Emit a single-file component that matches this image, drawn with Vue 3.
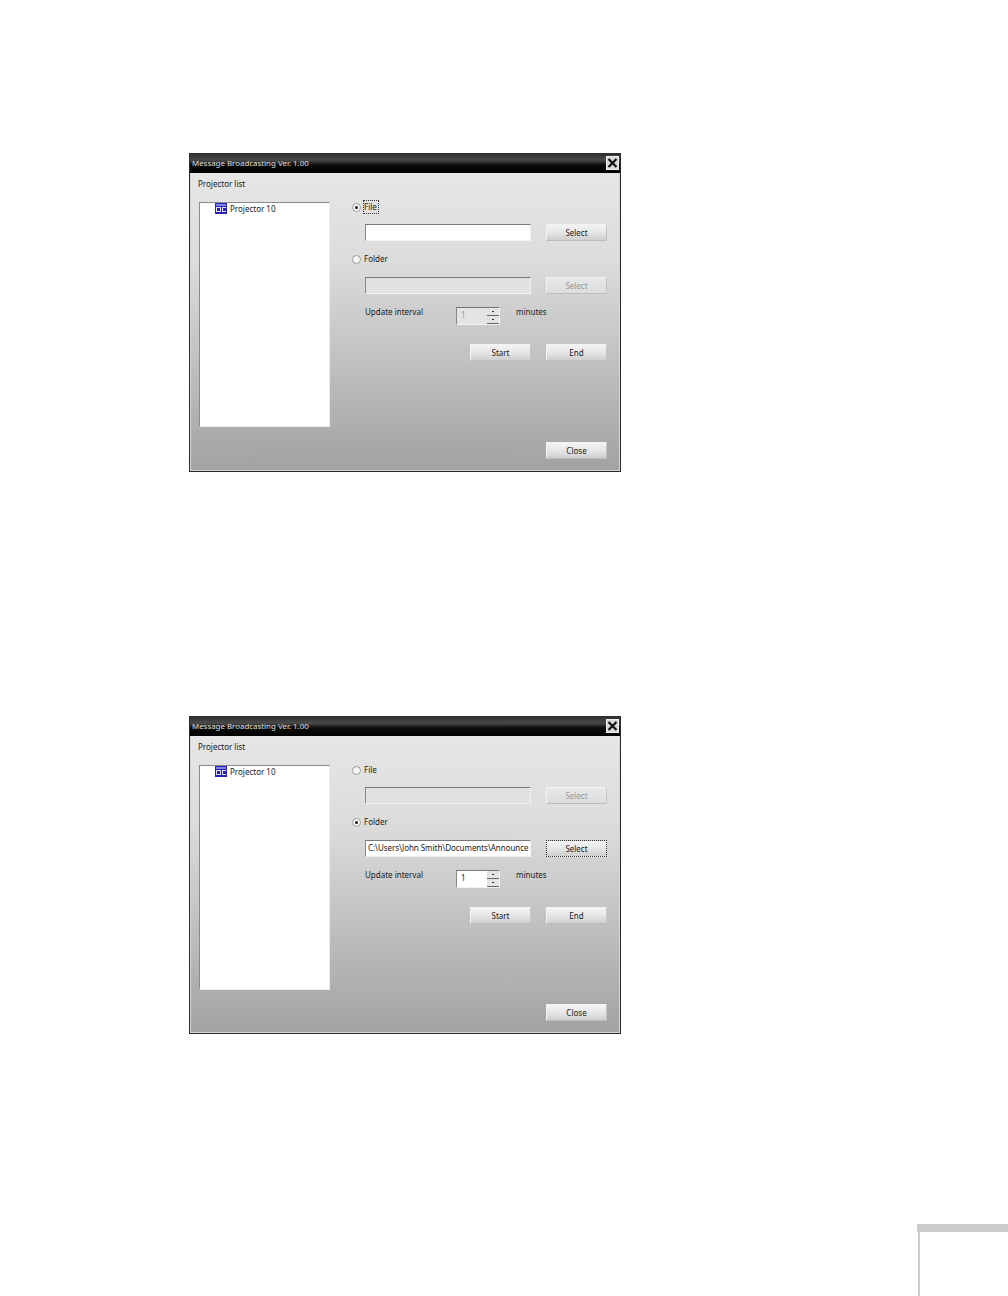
<script setup>
const dialogs = [
  { mode: 'file', path: '', focus: 'radio' },
  { mode: 'folder', path: 'C:\\Users\\John Smith\\Documents\\Announce', focus: 'select' }
]
</script>

<template>
  <div class="page">
    <section v-for="(d, i) in dialogs" :key="i" class="dialog">
      <header class="titlebar">
        <span class="title">Message Broadcasting Ver. 1.00</span>
        <span class="closex">
          <svg width="13" height="14" viewBox="0 0 13 14">
            <path d="M2.5 3 L10.5 11 M10.5 3 L2.5 11" stroke="#111" stroke-width="2.2" fill="none" />
          </svg>
        </span>
      </header>
      <div class="body">
        <div class="left">
          <div class="list-label">Projector list</div>
          <div class="list">
            <div class="tree-item">
              <svg class="pj" width="12" height="11" viewBox="0 0 12 11">
                <rect width="12" height="11" fill="#2a22b8" />
                <rect x="1" y="1" width="10" height="2" fill="#7d84e4" />
                <rect x="1" y="4" width="5" height="5" fill="#dfe2f8" />
                <rect x="7" y="4" width="4" height="5" fill="#dfe2f8" />
                <rect x="2" y="5" width="3" height="3" fill="#2a22b8" />
                <rect x="8" y="5" width="3" height="3" fill="#2a22b8" />
              </svg>
              <span>Projector 10</span>
            </div>
          </div>
        </div>
        <div class="right">
          <div class="radio-row first">
            <span class="radio" :class="{ on: d.mode === 'file' }"></span>
            <span class="radio-text" :class="{ dotted: d.focus === 'radio' }">File</span>
          </div>
          <div class="field-row">
            <div class="input" :class="{ off: d.mode !== 'file' }"></div>
            <button class="btn" :class="{ dis: d.mode !== 'file' }">Select</button>
          </div>
          <div class="radio-row">
            <span class="radio" :class="{ on: d.mode === 'folder' }"></span>
            <span class="radio-text">Folder</span>
          </div>
          <div class="field-row second">
            <div class="input" :class="{ off: d.mode !== 'folder' }">{{ d.path }}</div>
            <button class="btn" :class="{ dis: d.mode !== 'folder', focus: d.focus === 'select' }">
              <span>Select</span>
            </button>
          </div>
          <div class="interval-row">
            <span class="interval-label">Update interval</span>
            <div class="spin" :class="{ off: d.mode !== 'folder' }">
              <span class="spin-val">1</span>
              <span class="arrows">
                <i class="up"></i>
                <i class="down"></i>
              </span>
            </div>
            <span class="minutes">minutes</span>
          </div>
          <div class="actions">
            <button class="btn">Start</button>
            <button class="btn">End</button>
          </div>
          <div class="close-row">
            <button class="btn">Close</button>
          </div>
        </div>
      </div>
    </section>
    <div class="tab">
      <div class="tab-bar"></div>
      <div class="tab-body"></div>
    </div>
  </div>
</template>

<style scoped>
.page {
  position: relative;
  width: 1008px;
  height: 1296px;
  padding: 153px 0 0 189px;
  box-sizing: border-box;
  background: #fff;
  font-family: "Noto Sans", "Open Sans", sans-serif;
  font-size: 8px;
  color: #1a1a1a;
  overflow: hidden;
}
.dialog {
  width: 432px;
  height: 319px;
  box-sizing: border-box;
  border: 1px solid #2a2a2a;
  border-top: 0;
  margin-bottom: 244px;
  display: flex;
  flex-direction: column;
}
.dialog + .dialog {
  height: 318px;
}
.titlebar {
  height: 20px;
  flex: none;
  background: linear-gradient(#2c2c2c, #4a4a4a 35%, #0c0c0c 60%, #000);
  display: flex;
  align-items: center;
  justify-content: space-between;
  padding: 0 1px 0 2px;
}
.title {
  color: #ddd;
  font-size: 7.9px;
  line-height: 10px;
  margin-top: -1px;
}
.closex {
  width: 13px;
  height: 14px;
  background: #d8d8d8;
  outline: 1px solid #eee;
  outline-offset: -1px;
  display: flex;
}
.body {
  flex: 1;
  display: flex;
  min-height: 0;
  background: linear-gradient(#e6e6e6, #dcdcdc 30%, #a2a2a2);
  border: 1px solid #d6d6d6;
  border-top: 0;
  padding: 0 12px 0 7px;
}
.left {
  width: 132px;
  flex: none;
}
.list-label {
  height: 29px;
  padding-top: 5px;
  box-sizing: border-box;
  line-height: 12px;
}
.list {
  height: 225px;
  margin-left: 1px;
  box-sizing: border-box;
  background: #fff;
  border: 1px solid #8a8a8a;
  border-bottom-color: #eee;
  border-right-color: #eee;
  padding: 0 0 0 15px;
}
.tree-item {
  display: flex;
  align-items: center;
  gap: 3px;
  height: 11px;
}
.right {
  flex: 1;
  padding-left: 23px;
  min-width: 0;
  display: flex;
  flex-direction: column;
}
.radio-row {
  height: 14px;
  display: flex;
  align-items: center;
  gap: 2px;
  margin-top: 11px;
}
.radio-row.first {
  margin-top: 27px;
}
.radio {
  width: 7px;
  height: 7px;
  margin-left: -1px;
  border-radius: 50%;
  background: #f6f6f6;
  border: 1px solid #9a9a9a;
  position: relative;
  flex: none;
}
.radio.on::after {
  content: "";
  position: absolute;
  left: 2px;
  top: 2px;
  width: 3px;
  height: 3px;
  border-radius: 50%;
  background: #111;
}
.radio-text {
  line-height: 11px;
  padding: 0 1px 1px 0;
  border: 1px solid transparent;
}
.radio-text.dotted {
  border: 1px dotted #333;
}
.field-row {
  display: flex;
  justify-content: space-between;
  padding-left: 12px;
  margin-top: 10px;
}
.field-row.second {
  margin-top: 11px;
}
.input {
  width: 166px;
  height: 17px;
  box-sizing: border-box;
  background: #fff;
  border: 1px solid #f2f2f2;
  border-top: 1px solid #777;
  border-left: 1px solid #888;
  line-height: 13px;
  padding-left: 2px;
  letter-spacing: -0.05px;
  white-space: nowrap;
  overflow: hidden;
}
.input.off {
  background: #e2e2e2;
}
.btn {
  width: 61px;
  height: 17px;
  box-sizing: border-box;
  padding: 0 0 1px;
  margin: 0;
  font: inherit;
  color: #1a1a1a;
  background: linear-gradient(#f4f4f4, #e6e6e6 50%, #cfcfcf);
  border: 1px solid #f2f2f2;
  border-bottom-color: #bbb;
  border-right-color: #c4c4c4;
  display: flex;
  align-items: center;
  justify-content: center;
}
.btn.dis {
  color: #9a9a9a;
  background: linear-gradient(#e8e8e8, #dcdcdc);
}
.btn.focus {
  border: 1px dotted #333;
}
.interval-row {
  display: flex;
  align-items: flex-start;
  padding-left: 12px;
  margin-top: 13px;
  height: 18px;
}
.interval-label {
  width: 91px;
  line-height: 12px;
  margin-top: -1px;
}
.spin {
  width: 44px;
  height: 18px;
  box-sizing: border-box;
  background: #fff;
  border: 1px solid #f2f2f2;
  border-top: 1px solid #777;
  border-left: 1px solid #888;
  display: flex;
  justify-content: space-between;
  align-items: center;
  padding-left: 4px;
}
.spin-val {
  line-height: 10px;
  margin-top: -2px;
}
.spin.off {
  background: #e4e4e4;
  color: #999;
}
.arrows {
  width: 12px;
  height: 16px;
  display: flex;
  flex-direction: column;
}
.arrows i {
  flex: 1;
  background: #e4e4e4;
  border-bottom: 1px solid #666;
  position: relative;
}
.arrows i::after {
  content: "";
  position: absolute;
  left: 5px;
  top: 3px;
  width: 2px;
  height: 1px;
  background: #333;
}
.minutes {
  margin-left: 16px;
  line-height: 12px;
  margin-top: -1px;
}
.actions {
  display: flex;
  justify-content: flex-end;
  gap: 15px;
  margin-top: 19px;
}
.close-row {
  display: flex;
  justify-content: flex-end;
  margin-top: auto;
  margin-bottom: 11px;
}
.tab {
  position: absolute;
  left: 917px;
  top: 1224px;
  width: 91px;
  height: 72px;
}
.tab-bar {
  height: 8px;
  background: #cbcbcb;
}
.tab-body {
  width: 2px;
  height: 64px;
  margin-left: 1px;
  background: #cbcbcb;
}
</style>
